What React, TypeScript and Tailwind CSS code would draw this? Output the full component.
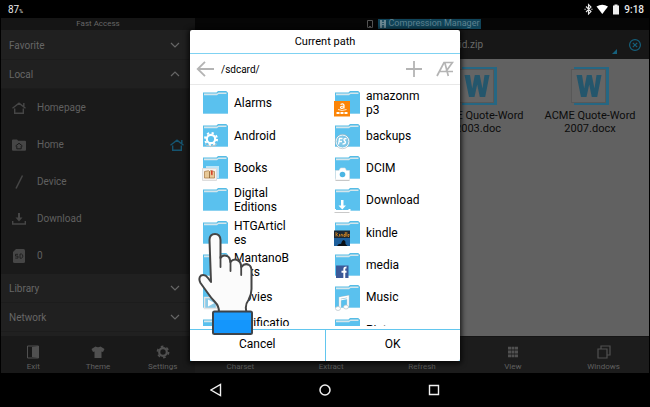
import type { ReactNode } from "react";

type BadgeKind =
  | "none" | "gear" | "book" | "amazon" | "es" | "camera"
  | "download" | "kindle" | "facebook" | "music" | "play";

function Badge({ kind }: { kind: BadgeKind }) {
  switch (kind) {
    case "gear":
      return (
        <g>
          <circle cx="9" cy="17" r="4.2" fill="none" stroke="#fff" strokeWidth="2.2" />
          <circle cx="9" cy="17" r="6" fill="none" stroke="#fff" strokeWidth="2" strokeDasharray="2.2 2.5" />
          <path d="M3 22q1.5 2 3.500 1.500q2 2.200 4.500 0q2.500 .5 4-1.800" fill="none" stroke="#c4c4c4" strokeWidth="1" />
        </g>
      );
    case "book":
      return (
        <g>
          <path d="M4 12h13v12h-13z" fill="#fff" opacity=".6" />
          <path d="M.5 14.500h14v12h-14z" fill="#f6f2ee" stroke="#ddd" />
          <path d="M2.500 17.500l4-.8l1 .8l1-.8l4 .8v6.500h-10z" fill="#e8c998" stroke="#a8763e" strokeWidth=".7" />
          <path d="M7.500 17.500v6.500" stroke="#7c5326" strokeWidth=".7" />
          <path d="M9 16.500h1.600v5l-.8-1l-.8 1z" fill="#d8402a" />
        </g>
      );
    case "amazon":
      return (
        <g>
          <rect x="0" y="12" width="16" height="15.500" fill="#fb8508" />
          <path d="M6.500 15.500q2.500-1.500 3.500 .5v3.500M10 17q-3.500 0-3.500 1.600q.8 1.800 3.500 0" fill="none" stroke="#fff" strokeWidth="1.200" />
          <path d="M4 20.500q4 2 8.500 0" fill="none" stroke="#fff" strokeWidth=".8" />
          <path d="M2.500 24h3M6.500 24h3M10.500 24h3" stroke="#fff" strokeWidth="2" />
        </g>
      );
    case "es":
      return (
        <g fill="none" stroke="#fff">
          <circle cx="8.500" cy="19.500" r="6.500" fill="#7fc6e6" />
          <circle cx="8.500" cy="19.500" r="7.200" stroke="#a8b4bb" strokeWidth=".6" />
          <path d="M8.500 16.500h-3l-1 6M5 19.500h3M12.500 16.500q-3 0-2.500 1.500l1.500 2q0 2-3 2" strokeWidth="1.300" />
        </g>
      );
    case "camera":
      return (
        <g>
          <path d="M1.500 16.500h3.500l1.500-2.500h4.500l1.500 2.500h3v9.500h-14z" fill="#fff" stroke="#ddd" strokeWidth=".6" />
          <circle cx="8.500" cy="20.500" r="2.800" fill="#4bb5e3" />
          <path d="M1.500 26.500h14" stroke="#bbb" strokeWidth=".8" />
        </g>
      );
    case "download":
      return (
        <g>
          <path d="M7 14h2.500v5.500h2.500l-3.700 4l-3.800-4h2.500z" fill="#fff" />
          <path d="M1 23v2h14.500v-2" fill="none" stroke="#fff" strokeWidth="2" />
          <path d="M.5 26.500h15" stroke="#bbb" strokeWidth=".8" />
        </g>
      );
    case "kindle":
      return (
        <g>
          <rect x="0" y="11.500" width="16" height="15.500" fill="#1b2733" />
          <path d="M0 19h16v8h-16z" fill="#1d5f9c" />
          <path d="M3 27q2-3 4-2q1-4 3-4q2 1 1.500 4l2 2z" fill="#0b1016" />
          <path d="M2 13v4.500M2 15.800l2-1.500M2.500 15.800l2 1.800M5.500 15v2.500M7 17.500v-2q1.500-.8 1.700.5v1.500M11.300 13v4.500h-1.300v-2h1.300M12.800 13v4.500M15 17.500h-1v-2h1.200v1" fill="none" stroke="#e58f22" strokeWidth=".8" />
        </g>
      );
    case "facebook":
      return (
        <g>
          <rect x="2" y="14.500" width="12.500" height="12.500" fill="#3b5998" />
          <path d="M10.300 27v-9q0-1.600 2.200-1.500M7.500 20.800h5" fill="none" stroke="#fff" strokeWidth="1.900" />
        </g>
      );
    case "music":
      return (
        <g>
          <path d="M6 25v-10l8-1.500v10" fill="none" stroke="#b7c3c9" strokeWidth="2.600" />
          <path d="M6 25v-10l8-1.500v10" fill="none" stroke="#fff" strokeWidth="1.600" />
          <path d="M6 17l8-1.500" stroke="#fff" strokeWidth="1.200" />
          <ellipse cx="4" cy="25.500" rx="2.500" ry="2" fill="#fff" stroke="#b7c3c9" strokeWidth=".7" />
          <ellipse cx="12" cy="24" rx="2.500" ry="2" fill="#fff" stroke="#b7c3c9" strokeWidth=".7" />
        </g>
      );
    case "play":
      return (
        <g>
          <path d="M2.500 14.500h12v11h-12z" fill="#8ccbe8" stroke="#e4e4e4" strokeWidth="1.500" />
          <path d="M6 16.500l6.500 3.500l-6.500 3.500z" fill="#fff" />
        </g>
      );
    default:
      return null;
  }
}

function Folder({ badge }: { badge: BadgeKind }) {
  return (
    <svg viewBox="0 0 28 28" className="h-7 w-7 shrink-0" aria-hidden="true">
      <path d="M1 3.500h13.500l1.500-1.500h8q1 0 1.500 1.500h.5v5h-25z" fill="#55bce6" />
      <path d="M2 4.500h13l1.500-1h8v4h-22.500z" fill="#d5e6ec" />
      <path d="M1 6.200h14l1.500-1.200h9.500v20h-25z" fill="#5ac1ee" />
      <path d="M1 24.500h25" stroke="#8dd2f0" />
      <Badge kind={badge} />
    </svg>
  );
}

const folders: { name: string; badge: BadgeKind }[] = [
  { name: "Alarms", badge: "none" },
  { name: "amazonmp3", badge: "amazon" },
  { name: "Android", badge: "gear" },
  { name: "backups", badge: "es" },
  { name: "Books", badge: "book" },
  { name: "DCIM", badge: "camera" },
  { name: "Digital Editions", badge: "none" },
  { name: "Download", badge: "download" },
  { name: "HTGArticles", badge: "none" },
  { name: "kindle", badge: "kindle" },
  { name: "MantanoBooks", badge: "none" },
  { name: "media", badge: "facebook" },
  { name: "Movies", badge: "play" },
  { name: "Music", badge: "music" },
  { name: "Notifications", badge: "none" },
  { name: "Pictures", badge: "none" },
];

function HouseIcon() {
  return (
    <svg viewBox="0 0 14 12" className="h-3 w-3.5" fill="none" stroke="currentColor" strokeWidth="1.400" aria-hidden="true">
      <path d="M.5 6.200l6.500-5l6.500 5M11.800 1v3.500M2.700 6.500v4.700h8.600v-4.700" />
    </svg>
  );
}

function HomeFolderIcon() {
  return (
    <svg viewBox="0 0 14 12" className="h-3 w-3.5" aria-hidden="true">
      <path d="M0 1.500q0-1 1-1h4l1.200 1.300h6.800q1 0 1 1v8q0 1-1 1h-12q-1 0-1-1z" fill="currentColor" />
      <path d="M3.500 7l3.500-2.700l3.500 2.700M4.800 7v2.800h4.400v-2.800" fill="none" stroke="#1a1a1a" />
    </svg>
  );
}

function SlashIcon() {
  return (
    <svg viewBox="0 0 14 14" className="h-3.5 w-3.5" stroke="currentColor" strokeWidth="1.500" aria-hidden="true">
      <path d="M4 13.500l6.500-13" />
    </svg>
  );
}

function DownloadIcon() {
  return (
    <svg viewBox="0 0 14 12" className="h-3 w-3.5" aria-hidden="true">
      <path d="M6 0h2v4.500h2.500l-3.500 4l-3.500-4h2.500z" fill="currentColor" />
      <path d="M.7 8v3h12.600v-3" fill="none" stroke="currentColor" strokeWidth="1.400" />
    </svg>
  );
}

function SdIcon() {
  return (
    <svg viewBox="0 0 14 14" className="h-3.5 w-3.5" aria-hidden="true">
      <path d="M4 0h7.500q1.500 0 1.500 1.500v11q0 1.500-1.500 1.500h-9q-1.500 0-1.500-1.500v-9.500z" fill="currentColor" />
      <path d="M6 5.300h-2.500v1.800h2.500v2h-2.800M8 5v4.200h1.500q1.300-.4 1.300-2.100t-1.300-2.100z" fill="none" stroke="#1a1a1a" strokeWidth=".8" />
    </svg>
  );
}

function Section({ label, open }: { label: string; open?: boolean }) {
  return (
    <button className="flex h-[29px] w-full items-center justify-between border-b border-[#1c1c1c] bg-[#202020] pr-[9px] pl-2 text-[10px] text-[#666666]">
      {label}
      <svg viewBox="0 0 10 6" className="h-1.5 w-2.5" fill="none" stroke="currentColor" strokeWidth="1.200" aria-hidden="true">
        <path d={open ? "M1 5l4-4l4 4" : "M1 1l4 4l4-4"} />
      </svg>
    </button>
  );
}

function Place({ icon, label, pinned }: { icon: ReactNode; label: string; pinned?: boolean }) {
  return (
    <button className="flex h-[37px] w-full items-center pr-[5px] pl-[11px] text-[10px] text-[#606060]">
      <span className="text-[#464646]">{icon}</span>
      <span className="ml-[11px]">{label}</span>
      {pinned && (
        <span className="ml-auto text-[#155470]">
          <HouseIcon />
        </span>
      )}
    </button>
  );
}

function Tool({ label, children }: { label: string; children?: ReactNode }) {
  return (
    <button className="flex h-full flex-1 flex-col items-center justify-end gap-[3px] pb-px text-[8px] leading-[10px] text-[#606060]">
      <svg viewBox="0 0 14 14" className="h-3.5 w-3.5 text-[#505050]" fill="none" stroke="currentColor" aria-hidden="true">
        {children}
      </svg>
      {label}
    </button>
  );
}

function WordFile({ name, className }: { name: string; className: string }) {
  return (
    <div className={`flex flex-col items-center gap-1 text-center text-[11px] leading-[13px] text-[#0c0c0c] ${className}`}>
      <svg viewBox="0 0 38 38" className="h-[38px] w-[38px]" aria-hidden="true">
        <path d="M3 0h35v38h-35v-2h32v-34h-32z" fill="#266783" />
        <rect x=".5" y="2.500" width="34" height="33" fill="#656565" stroke="#585858" />
        <path d="M5.500 8h5.500l2.200 13.500l2.600-13.500h4.900l2.800 13.500l2-13.500h5l-4.300 22h-5.400l-2.600-12.500l-2.700 12.500h-5.500z" fill="#24566c" />
      </svg>
      <p className="w-24">{name}</p>
    </div>
  );
}

function Hand() {
  return (
    <svg viewBox="198 232 56 104" className="pointer-events-none absolute top-[202px] left-2 h-[104px] w-14" aria-hidden="true">
      <path
        d="M219 312Q219 306 215 302Q211 298 207 292L200.500 283Q198 278 201 275.500Q205 274 208 278L211 282L209.500 240Q209.700 234 215 234Q220.200 234 220.500 240V258Q223 254.500 227 256Q230 257 230.300 262Q234 258 238 260.500Q241 262 241.300 267Q245 262.500 249 265Q251.500 266.500 251.500 271V289Q251.500 295 248.500 300Q244.500 305 246.500 312Z"
        fill="#fbfbfb" stroke="#454545" strokeWidth="2" strokeLinejoin="round"
      />
      <path d="M220.500 257V267M230.500 261V271M241.200 266V275" fill="none" stroke="#454545" strokeWidth="1.800" strokeLinecap="round" />
      <rect x="213" y="311.500" width="39" height="22.500" rx="1.500" fill="#1496fc" stroke="#3d444b" strokeWidth="2" />
      <path d="M214 313h37v7h-37z" fill="#22a0ff" opacity=".6" />
    </svg>
  );
}

function PathDialog() {
  return (
    <div role="dialog" aria-labelledby="dialog-title" className="relative flex h-[331px] w-[270px] flex-col rounded-xs bg-white text-black shadow-[0_1px_5px_2px_rgba(0,0,0,0.7)]">
      <h1 id="dialog-title" className="flex h-6 items-center justify-center border-b border-[#7fd2f2] pt-0.5 text-[11px]">
        Current path
      </h1>
      <div className="flex h-[31px] items-center border-b border-[#e8e8e8] px-1.5 text-[#b4b4b4]">
        <button aria-label="Back">
          <svg viewBox="0 0 18 16" className="h-4 w-[18px]" fill="none" stroke="currentColor" strokeWidth="1.800">
            <path d="M9 .8l-7.300 7.200l7.300 7.200M2 8h16" />
          </svg>
        </button>
        <span className="ml-[7px] text-[10px] text-black">/sdcard/</span>
        <button aria-label="New folder" className="ml-auto">
          <svg viewBox="0 0 16 16" className="h-4 w-4" stroke="currentColor" strokeWidth="1.800">
            <path d="M8 0v16M0 8h16" />
          </svg>
        </button>
        <button aria-label="Sort by name" className="ml-3.5">
          <svg viewBox="0 0 18 16" className="h-4 w-[18px]" fill="none" stroke="currentColor" strokeWidth="1.700">
            <path d="M1 15l7-13.500h.800l3.500 13.500M4 10.500h6.500M9 1.500h7.500l-6.500 9h7" />
          </svg>
        </button>
      </div>
      <div className="h-[241px] overflow-hidden pt-0.5">
        <ul className="grid h-[259px] grid-cols-[132px_1fr] grid-rows-8 pl-3">
          {folders.map((f) => (
            <li key={f.name} className="flex min-h-0 items-center">
              <button className="flex items-center gap-1 text-left text-[12px] leading-[14px]">
                <Folder badge={f.badge} />
                <span className="w-[57px] wrap-break-word">{f.name}</span>
              </button>
            </li>
          ))}
        </ul>
      </div>
      <div className="mt-[3px] flex flex-1 gap-px bg-[#62c6ee] pt-px text-[12px]">
        <button className="flex-1 rounded-bl-xs bg-white pb-1">Cancel</button>
        <button className="flex-1 rounded-br-xs bg-white pb-1">OK</button>
      </div>
      <Hand />
    </div>
  );
}

export default function App() {
  return (
    <div className="relative flex min-h-screen flex-col bg-black font-[Roboto,'Liberation_Sans',sans-serif]">
      <header className="flex h-[18px] items-center justify-between pr-1.5 pl-2 text-[10px] text-[#e8e8e8]">
        <span className="font-['Liberation_Sans_Narrow',Roboto,sans-serif]">87<span className="text-[5px]">%</span></span>
        <div className="flex items-center gap-1">
          <svg viewBox="0 0 38 12" className="h-3 w-[38px]" aria-hidden="true">
            <path d="M4 9l5-5l-2.500-2.500v9.500l2.500-2.500l-5-5M2.500 6.200h1.200M9.300 6.200h1.200" fill="none" stroke="#e8e8e8" strokeWidth="1.100" />
            <path d="M14.500 3.500q5.700-3.500 11.500 0l-5.700 7.500z" fill="#fff" />
            <path d="M31 2.500h1.500v-1h3v1h1.500v9h-6z" fill="#eee" />
          </svg>
          <time className="font-medium">9:18</time>
        </div>
      </header>

      <div className="flex flex-1 px-px">
        <aside className="flex w-[194px] shrink-0 flex-col bg-[#202020]">
          <h2 className="flex h-3 items-center justify-center bg-[#151515] text-[8px] text-[#666666]">Fast Access</h2>
          <nav className="w-[188px] pt-px">
            <Section label="Favorite" />
            <Section label="Local" open />
            <div className="bg-[#1a1a1a]">
              <Place icon={<HouseIcon />} label="Homepage" />
              <Place icon={<HomeFolderIcon />} label="Home" pinned />
              <Place icon={<SlashIcon />} label="Device" />
              <Place icon={<DownloadIcon />} label="Download" />
              <Place icon={<SdIcon />} label="0" />
            </div>
            <Section label="Library" />
            <Section label="Network" />
          </nav>
        </aside>

        <main className="flex min-w-0 flex-1 flex-col bg-[#616161]">
          <div className="flex h-3 items-center justify-center gap-[5px] bg-[#060606] pl-1 text-[9px]">
            <svg viewBox="0 0 6 8" className="h-2 w-1.5" fill="none" stroke="#555" aria-hidden="true">
              <path d="M.5 .5h5v7h-5zM2 6.500h2" />
            </svg>
            <button className="flex h-2.5 items-center gap-[3px] bg-[#104459] px-0.5 text-[#5f8290]">
              <svg viewBox="0 0 6 8" className="h-2 w-1.5" aria-hidden="true">
                <path d="M0 0h6v8h-6z" fill="#6b8792" />
                <path d="M3 0v2M3 3v1M3 5v3" stroke="#104459" strokeWidth="1.500" />
              </svg>
              Compression Manager
            </button>
          </div>
          <div className="flex h-[29px] items-center justify-end bg-[#171717] pr-2 text-[#15607c]">
            <span className="text-[10px] text-[#6a6a6a]">android.zip</span>
            <button aria-label="Choose path" className="ml-[129px] self-end pb-[5px]">
              <svg viewBox="0 0 5 5" className="h-[5px] w-[5px]"><path d="M5 0v5h-5z" fill="currentColor" /></svg>
            </button>
            <button aria-label="Close" className="ml-3">
              <svg viewBox="0 0 12 12" className="h-3 w-3" fill="none" stroke="currentColor" strokeWidth="1.200">
                <circle cx="6" cy="6" r="5.400" />
                <path d="M3.800 3.800l4.400 4.400M8.200 3.800l-4.400 4.400" />
              </svg>
            </button>
          </div>
          <div className="grid grid-cols-4 px-[3px] pt-2">
            <WordFile name="ACME Quote-Word 2003.doc" className="col-start-3" />
            <WordFile name="ACME Quote-Word 2007.docx" className="col-start-4" />
          </div>
        </main>
      </div>

      <div className="flex h-[37px] px-px">
        <div className="flex w-[194px] shrink-0 bg-[#191919]">
          <Tool label="Exit">
            <path d="M1.500 1h11v12h-11z" />
            <path d="M6 2l6-1v12l-6-1z" fill="currentColor" stroke="none" />
          </Tool>
          <Tool label="Theme">
            <path d="M4.500 1.500q2.500 1.500 5 0l4 2.500l-1.500 3l-1.500-.6v6.600h-7v-6.600l-1.500 .6l-1.500-3z" fill="currentColor" stroke="none" />
          </Tool>
          <Tool label="Settings">
            <circle cx="7" cy="7" r="3.800" strokeWidth="2.200" />
            <circle cx="7" cy="7" r="5.500" strokeWidth="1.800" strokeDasharray="2.600 3.160" />
          </Tool>
        </div>
        <div className="flex flex-1 border-t border-[#151515] bg-[#1c1c1c]">
          <Tool label="Charset" />
          <Tool label="Extract" />
          <Tool label="Refresh" />
          <Tool label="View">
            <path d="M2 3.200h3M5.500 3.200h3M9 3.200h3M2 7h3M5.500 7h3M9 7h3M2 10.800h3M5.500 10.800h3M9 10.800h3" strokeWidth="2.800" />
          </Tool>
          <Tool label="Windows">
            <path d="M1 4h9v9h-9zM4 3.500v-2.500h9v9h-2.500" strokeWidth="1.200" />
          </Tool>
        </div>
      </div>

      <footer className="flex h-[34px] items-center justify-center gap-[97px]">
        <button aria-label="Back">
          <svg viewBox="0 0 12 14" className="h-3.5 w-3" fill="none" stroke="#f0f0f0" strokeWidth="1.400"><path d="M10.500 1.500v11l-9.500-5.500z" /></svg>
        </button>
        <button aria-label="Home">
          <svg viewBox="0 0 12 12" className="h-3 w-3" fill="none" stroke="#f0f0f0" strokeWidth="1.500"><circle cx="6" cy="6" r="5" /></svg>
        </button>
        <button aria-label="Recent apps">
          <svg viewBox="0 0 12 12" className="h-3 w-3" fill="none" stroke="#f0f0f0" strokeWidth="1.400"><path d="M1.500 1.500h9v9h-9z" /></svg>
        </button>
      </footer>

      <div className="absolute inset-x-0 top-[18px] bottom-[34px] flex items-center justify-center">
        <PathDialog />
      </div>
    </div>
  );
}
